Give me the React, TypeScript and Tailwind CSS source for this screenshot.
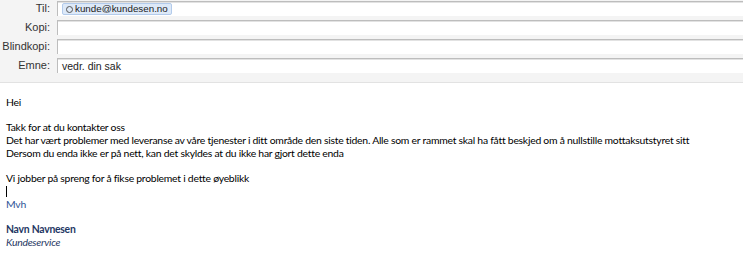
import React from "react";

const Field: React.FC<{ label: string; children?: React.ReactNode }> = ({
  label,
  children,
}) => (
  <div className="flex items-center h-[15px]">
    <div className="w-[50px] shrink-0 text-right text-[11px] text-[#333] leading-none whitespace-nowrap">
      {label}
    </div>
    <div className="ml-[7px] flex-1 h-[15px] bg-white border-t border-l border-[#bdbdbd] shadow-[inset_0_1px_0_#e2e2e2] flex items-center pl-[4px] text-[10.5px] text-[#222] leading-none">
      {children}
    </div>
  </div>
);

export default function App() {
  return (
    <div className="w-[743px] h-[265px] bg-white overflow-hidden font-[family-name:'Liberation_Sans',Arial,sans-serif]">
      {/* Header */}
      <div className="h-[83px] bg-[#f4f4f4] border-b border-[#e2e2e2] pt-[1px]">
        <div className="flex flex-col gap-[4px]">
          <Field label="Til:">
            <span className="flex items-center h-[12px] px-[3px] gap-[2px] rounded-[2px] bg-[#dde9f8] border border-[#b3cbeb] text-[9.8px]">
              <span className="w-[7px] h-[7px] rounded-full border border-[#555]" />
              kunde@kundesen.no
            </span>
          </Field>
          <Field label="Kopi:" />
          <Field label="Blindkopi:" />
          <Field label="Emne:">vedr. din sak</Field>
        </div>
      </div>

      {/* Body */}
      <div className="px-[6px] pt-[13px] text-[10.4px] tracking-[-0.25px] leading-[12.7px] text-black whitespace-nowrap font-[family-name:Lato,sans-serif]">
        <p>Hei</p>
        <p>&nbsp;</p>
        <p>Takk for at du kontakter oss</p>
        <p>
          Det har vært problemer med leveranse av våre tjenester i ditt område
          den siste tiden. Alle som er rammet skal ha fått beskjed om å
          nullstille mottaksutstyret sitt
        </p>
        <p>Dersom du enda ikke er på nett, kan det skyldes at du ikke har gjort dette enda</p>
        <p>&nbsp;</p>
        <p>Vi jobber på spreng for å fikse problemet i dette øyeblikk</p>
        <p className="h-[12.7px] flex items-center">
          <span className="w-[1px] h-[11px] bg-black" />
        </p>
        <p className="text-[#2f5597]">Mvh</p>
        <p>&nbsp;</p>
        <p className="font-bold text-[#1f3864]">Navn Navnesen</p>
        <p className="italic text-[#1f3864]">Kundeservice</p>
      </div>
    </div>
  );
}
